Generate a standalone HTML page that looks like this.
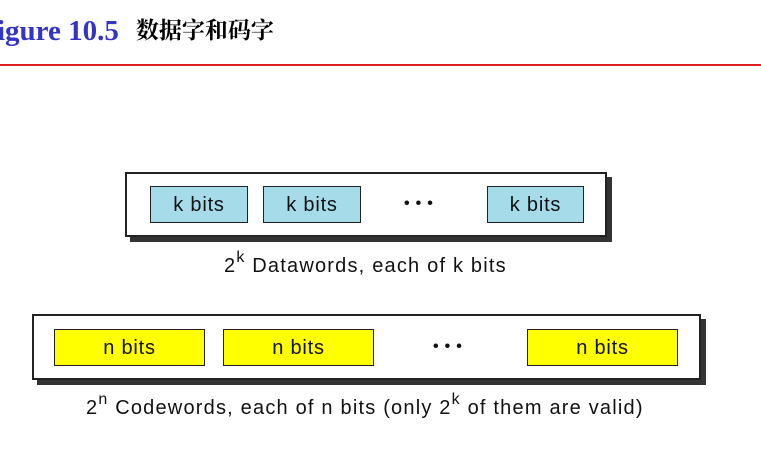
<!DOCTYPE html><html><head><style>
body{margin:0;width:761px;height:455px;background:#fff;position:relative;overflow:hidden;font-family:"Liberation Sans","DejaVu Sans",sans-serif}
.a{position:absolute;box-sizing:border-box}
.o{border:2px solid #222;background:#fff;box-shadow:5px 5px 0 #333}
.k{border:1.5px solid #222;background:#a6dcea;font-size:20px;text-align:center;line-height:36px;color:#111;letter-spacing:0.8px}
.n{border:1.5px solid #222;background:#ffff00;font-size:20px;text-align:center;line-height:36px;color:#111;letter-spacing:0.8px}
.t{font-size:20px;color:#111;white-space:nowrap;letter-spacing:1.2px}
sup{font-size:16px;vertical-align:10px;line-height:0}
.d{font-size:16px;font-weight:bold;letter-spacing:6px}
</style></head><body>
<div class="a" style="left:-3px;top:12px;font:bold 29px 'Liberation Serif',serif;color:#3434c8;white-space:nowrap">igure 10.5<span style="font:bold 23px 'Liberation Serif','Noto Serif CJK SC',serif;color:#000;margin-left:17px;vertical-align:2px">数据字和码字</span></div>
<div class="a" style="left:0;top:64px;width:761px;height:2px;background:#e02020"></div>
<div class="a o" style="left:125px;top:172px;width:482px;height:65px"></div>
<div class="a k" style="left:150px;top:186px;width:98px;height:37px">k bits</div>
<div class="a k" style="left:263px;top:186px;width:98px;height:37px">k bits</div>
<div class="a t d" style="left:404px;top:195px">•••</div>
<div class="a k" style="left:487px;top:186px;width:97px;height:37px">k bits</div>
<div class="a t" style="left:224px;top:255px">2<sup>k</sup> Datawords, each of k bits</div>
<div class="a o" style="left:32px;top:314px;width:669px;height:66px"></div>
<div class="a n" style="left:54px;top:329px;width:151px;height:37px">n bits</div>
<div class="a n" style="left:223px;top:329px;width:151px;height:37px">n bits</div>
<div class="a t d" style="left:433px;top:338px">•••</div>
<div class="a n" style="left:527px;top:329px;width:151px;height:37px">n bits</div>
<div class="a t" style="left:86px;top:397px">2<sup>n</sup> Codewords, each of n bits (only 2<sup>k</sup> of them are valid)</div>
</body></html>
